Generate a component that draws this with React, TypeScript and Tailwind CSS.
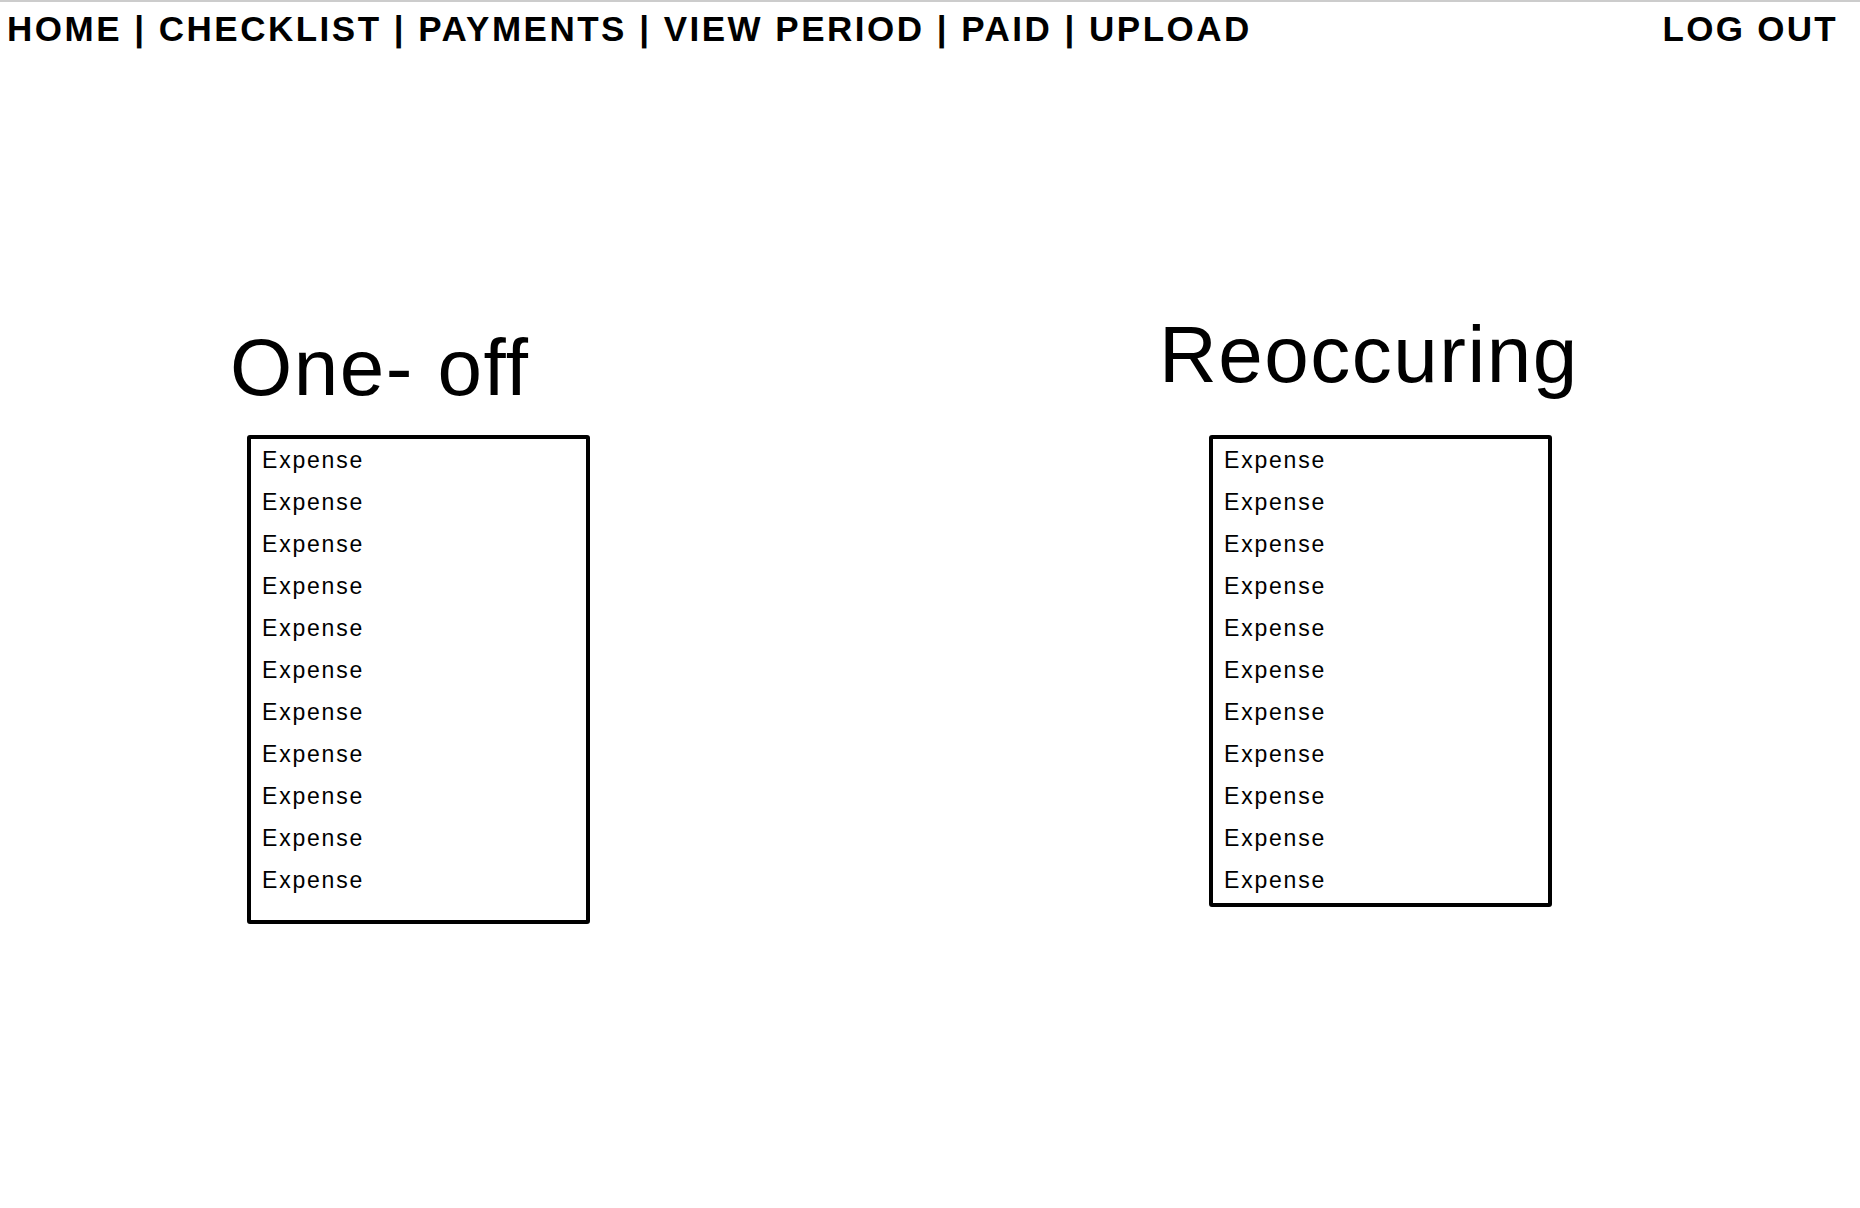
import React from 'react';

const navItems = ['HOME', 'CHECKLIST', 'PAYMENTS', 'VIEW PERIOD', 'PAID', 'UPLOAD'];

const font = { fontFamily: '"Liberation Sans", Arial, sans-serif' };

interface ExpenseListProps {
  title: string;
  items: string[];
  titleGap: string;
  boxPad: string;
}

function ExpenseList({ title, items, titleGap, boxPad }: ExpenseListProps) {
  return (
    <div className="flex flex-col">
      <h2 className="text-[80px] leading-none font-normal tracking-[1.5px] text-black [font-variant-ligatures:none]">
        {title}
      </h2>
      {/* List box */}
      <div
        className={`w-[343px] border-[4px] border-black rounded-[3px] pl-[11px] ${titleGap} ${boxPad}`}
      >
        {items.map((item, i) => (
          <div key={i} className="text-[23px] leading-[42px] tracking-[1.8px] text-black">
            {item}
          </div>
        ))}
      </div>
    </div>
  );
}

export default function App() {
  const expenses = Array.from({ length: 11 }, () => 'Expense');

  return (
    <div className="min-h-[1208px] w-full bg-white border-t-[2px] border-[#cccccc]" style={font}>
      {/* Nav */}
      <div className="flex items-start justify-between pt-[9px] pl-[7px] pr-[22px]">
        <nav className="flex text-[35px] leading-none font-bold tracking-[2.5px] text-black whitespace-pre">
          {navItems.map((item, i) => (
            <span key={item}>
              {item}
              {i < navItems.length - 1 ? ' | ' : ''}
            </span>
          ))}
        </nav>
        <button className="text-[35px] leading-none font-bold tracking-[2.3px] text-black">LOG OUT</button>
      </div>

      {/* Lists */}
      <div className="flex items-start">
        <div className="ml-[230px] pt-[282px]">
          <ExpenseList title="One- off" items={expenses} titleGap="mt-[27px] ml-[17px]" boxPad="pb-[19px]" />
        </div>
        <div className="ml-[569px] pt-[269px]">
          <ExpenseList title="Reoccuring" items={expenses} titleGap="mt-[40px] ml-[50px]" boxPad="pb-[2px]" />
        </div>
      </div>
    </div>
  );
}
